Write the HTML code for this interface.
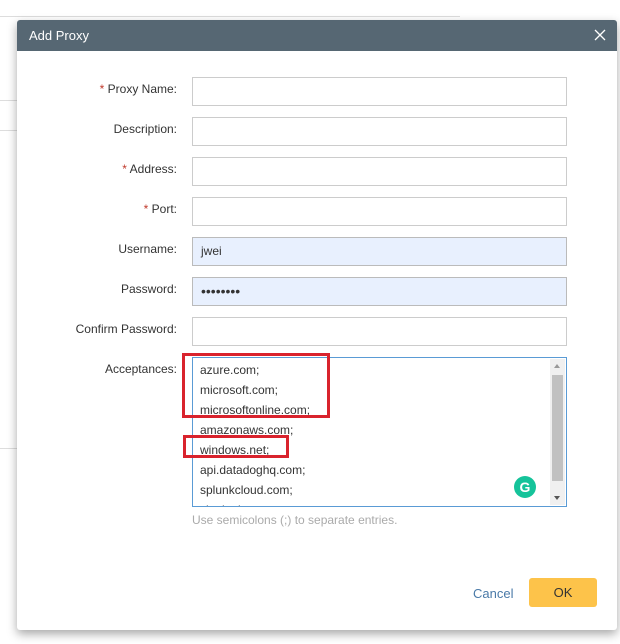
<!DOCTYPE html>
<html><head><style>
*{box-sizing:border-box;margin:0;padding:0}
body{width:620px;height:644px;background:#fff;font-family:"Liberation Sans",sans-serif;font-size:12px;color:#333;position:relative;overflow:hidden}
.bg{position:absolute;background:#ddd}
.dlg{position:absolute;left:17px;top:20px;width:600px;height:610px;background:#fff;border-radius:3px;box-shadow:0 4px 10px rgba(0,0,0,.35)}
.hd{height:31px;background:#566773;color:#fff;font-size:13px;line-height:31px;padding-left:12px;border-radius:3px 3px 0 0;position:relative}
.x{position:absolute;right:10px;top:8px}
.lb{position:absolute;right:440px;width:150px;text-align:right;font-size:12px;color:#333}
.lb b{color:#c0392b;font-weight:normal}
.in{position:absolute;left:175px;width:375px;height:29px;border:1px solid #ccc;background:#fff;padding:0 8px;line-height:27px;font-size:12px}
.fill{background:#e8f0fe;border-color:#bbb}
.ta{position:absolute;left:175px;top:337px;width:375px;height:150px;border:1px solid #5a9bd5;overflow:hidden}
.ta .t{position:absolute;left:7px;font-size:12px;color:#333}
.sb{position:absolute;right:1px;top:1px;width:15px;height:146px;background:#f0f0f0}
.th{position:absolute;left:2px;top:16px;width:11px;height:106px;background:#c1c1c1}
.red{position:absolute;border:3px solid #d9232d}
</style></head><body>
<div class="bg" style="left:0;top:16px;width:460px;height:1px"></div>
<div class="bg" style="left:0;top:100px;width:17px;height:1px"></div>
<div class="bg" style="left:0;top:130px;width:17px;height:1px"></div>
<div class="bg" style="left:0;top:448px;width:17px;height:1px"></div>
<div class="dlg">
<div class="hd">Add Proxy<svg class="x" width="14" height="14" viewBox="0 0 14 14"><path d="M2 2L12 12M12 2L2 12" stroke="#fff" stroke-width="1.3"/></svg></div>
<div class="lb" style="top:62px"><b>*</b> Proxy Name:</div>
<div class="in" style="top:57px"></div>
<div class="lb" style="top:102px">Description:</div>
<div class="in" style="top:97px"></div>
<div class="lb" style="top:142px"><b>*</b> Address:</div>
<div class="in" style="top:137px"></div>
<div class="lb" style="top:182px"><b>*</b> Port:</div>
<div class="in" style="top:177px"></div>
<div class="lb" style="top:222px">Username:</div>
<div class="in fill" style="top:217px">jwei</div>
<div class="lb" style="top:262px">Password:</div>
<div class="in fill" style="top:257px;font-size:14px">••••••••</div>
<div class="lb" style="top:302px">Confirm Password:</div>
<div class="in" style="top:297px"></div>
<div class="lb" style="top:342px">Acceptances:</div>
<div class="ta">
<div class="t" style="top:5px">azure.com;</div>
<div class="t" style="top:25px">microsoft.com;</div>
<div class="t" style="top:45px">microsoftonline.com;</div>
<div class="t" style="top:65px">amazonaws.com;</div>
<div class="t" style="top:85px">windows.net;</div>
<div class="t" style="top:105px">api.datadoghq.com;</div>
<div class="t" style="top:125px">splunkcloud.com;</div>
<div class="t" style="top:145px">sleek.ak</div>
<span style="position:absolute;left:321px;top:118px;width:22px;height:22px;border-radius:50%;background:#15c39a;color:#fff;font-size:14px;text-align:center;line-height:22px;font-weight:bold">G</span>
<div class="sb"><div class="th"></div>
<div style="position:absolute;left:4px;top:5px;border:3.5px solid transparent;border-bottom:4px solid #999;border-top:0"></div>
<div style="position:absolute;left:4px;bottom:5px;border:3.5px solid transparent;border-top:4px solid #555;border-bottom:0"></div>
</div>
</div>
<div class="red" style="left:165px;top:333px;width:148px;height:65px"></div>
<div class="red" style="left:166px;top:415px;width:106px;height:23px"></div>
<div style="position:absolute;left:175px;top:493px;color:#aaa;font-size:12px">Use semicolons (;) to separate entries.</div>
<div style="position:absolute;left:456px;top:566px;color:#4a7aa8;font-size:13px">Cancel</div>
<div style="position:absolute;left:512px;top:558px;width:68px;height:29px;background:#fdc34a;border-radius:3px;text-align:center;line-height:29px;font-size:13px">OK</div>
</div>
</body></html>
